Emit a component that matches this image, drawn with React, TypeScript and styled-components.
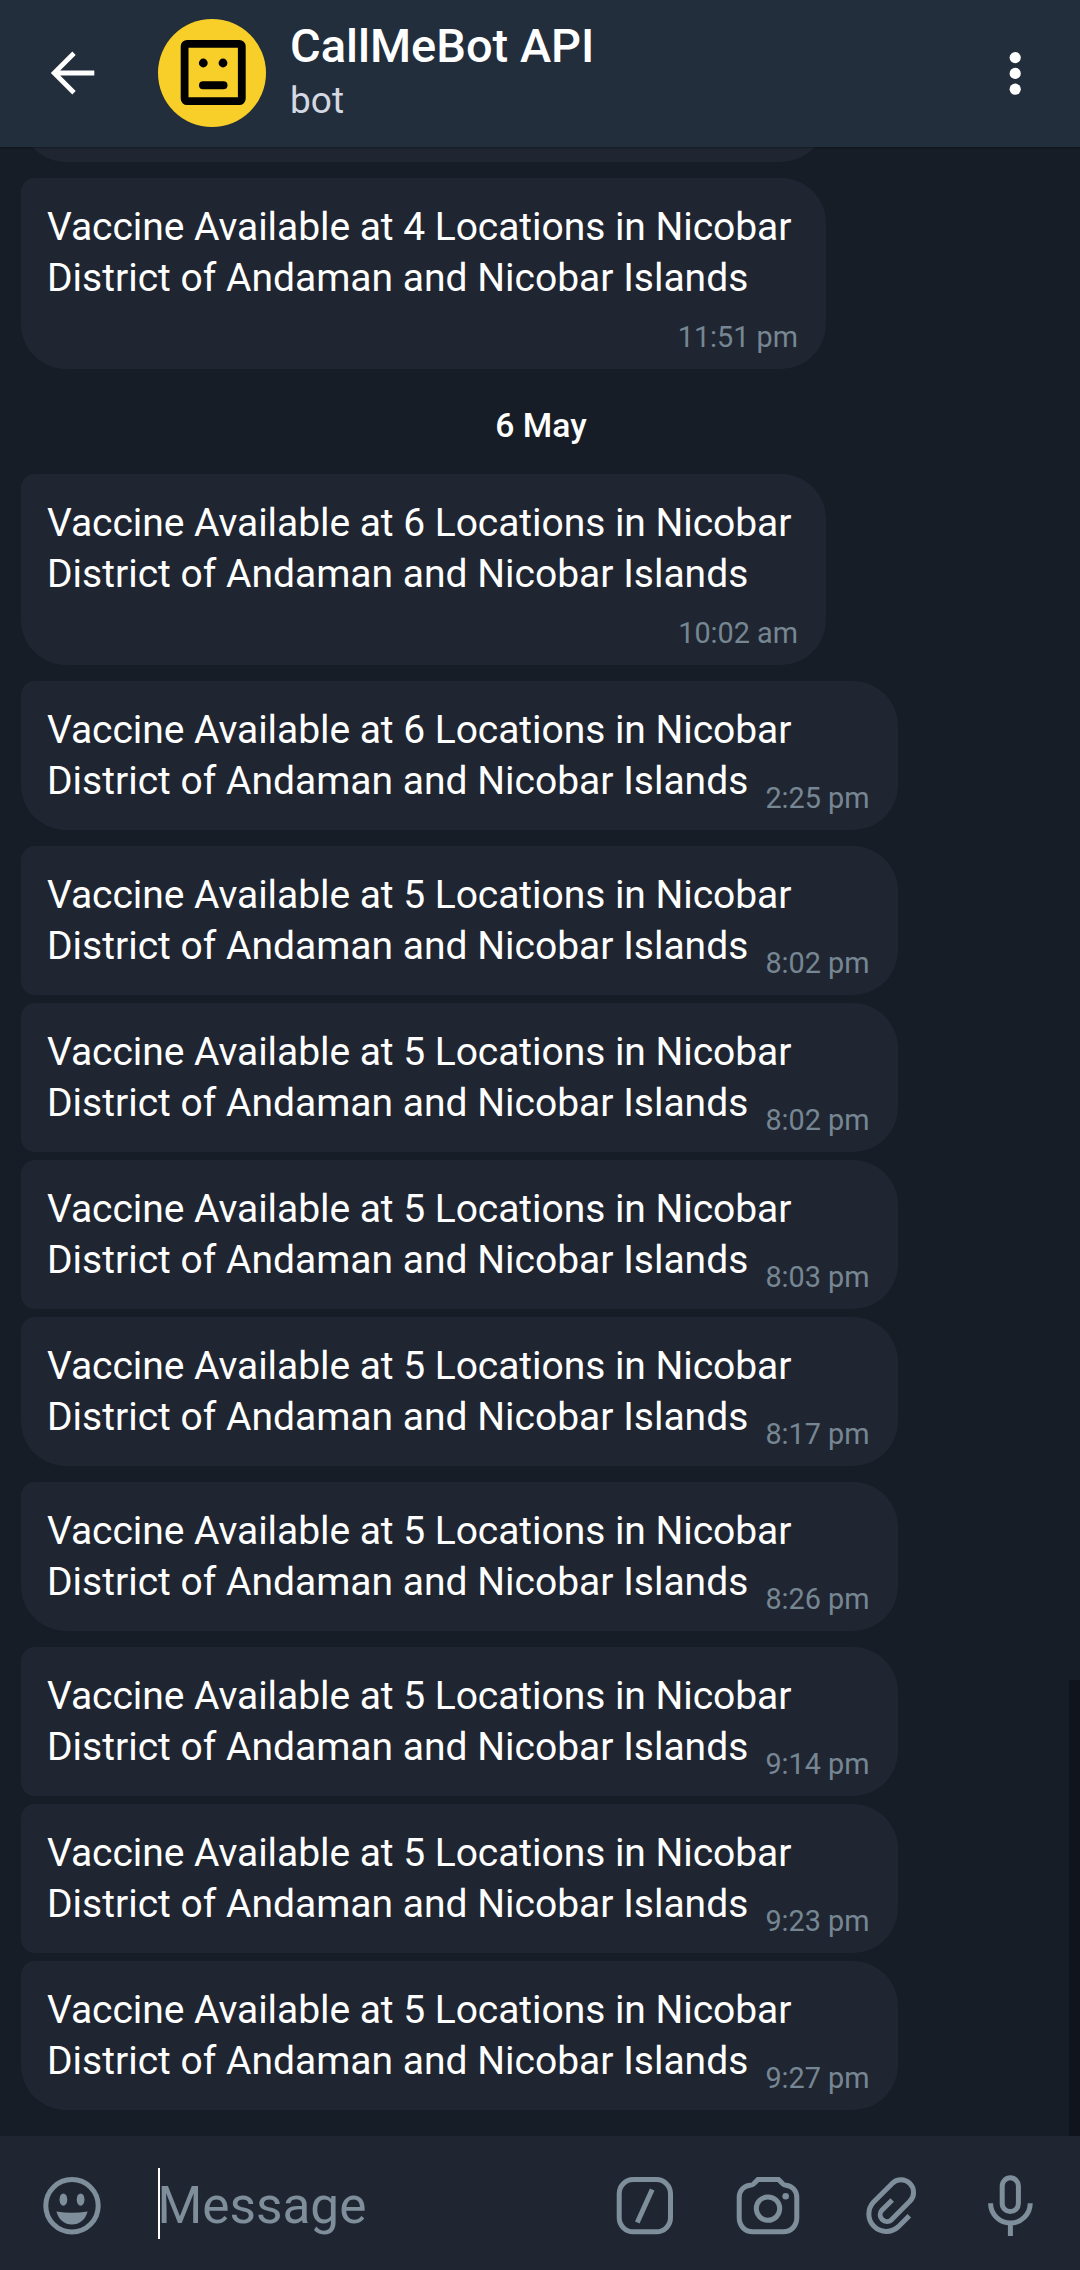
import React from "react";
import styled, { createGlobalStyle } from "styled-components";

const GlobalStyle = createGlobalStyle`
  html, body { margin: 0; padding: 0; background: #171d26; }
  *, *::before, *::after { box-sizing: border-box; }
`;

const Screen = styled.div`
  display: flex;
  flex-direction: column;
  position: relative;
  width: 1080px;
  height: 2270px;
  overflow: hidden;
  background: #171d26;
  color: #fff;
  font-family: Roboto, "Noto Sans", sans-serif;
`;

const Header = styled.header`
  flex: none;
  display: flex;
  align-items: center;
  height: 147px;
  padding: 0 59px 1px 49px;
  background: #232e3c;
  box-shadow: 0 1px 2px rgba(0, 0, 0, 0.3);
  z-index: 1;
`;

const Icon = styled.svg`
  display: block;
  flex: none;
  overflow: visible;
`;

const Avatar = styled.div`
  flex: none;
  display: flex;
  width: 108px;
  height: 108px;
  margin-left: 64px;
  border-radius: 50%;
  background: #f8cf28;
`;

const Peer = styled.div`
  flex: 1;
  display: flex;
  flex-direction: column;
  align-self: flex-start;
  gap: 3px;
  margin-left: 24px;
  padding-top: 18px;
`;

const Title = styled.h1`
  margin: 0;
  font-size: 47px;
  font-weight: 500;
  line-height: 56px;
  white-space: nowrap;
`;

const Subtitle = styled.span`
  font-size: 37px;
  line-height: 48px;
  color: #d3d8e2;
`;

const Feed = styled.main`
  flex: 1;
  display: flex;
  flex-direction: column;
  justify-content: flex-end;
  align-items: flex-start;
  min-height: 0;
  padding: 0 21px 26px;
  overflow: hidden;
`;

type BubbleProps = { $wrapTime?: boolean; $joined?: boolean };

const Bubble = styled.article<BubbleProps>`
  flex: none;
  display: flex;
  flex-direction: ${(p) => (p.$wrapTime ? "column" : "row")};
  align-items: flex-end;
  justify-content: space-between;
  width: ${(p) => (p.$wrapTime ? 805 : 876.5)}px;
  height: ${(p) => (p.$wrapTime ? 191 : 149)}px;
  margin-bottom: ${(p) => (p.$joined ? 8 : 16)}px;
  padding: 24px 28px 15px 26px;
  border-radius: 45px;
  border-top-left-radius: 14px;
  border-bottom-left-radius: ${(p) => (p.$joined ? 14 : 45)}px;
  background: #1f2632;

  &:last-child {
    margin-bottom: 0;
  }
`;

const Body = styled.p<{ $wrapTime?: boolean }>`
  flex: ${(p) => (p.$wrapTime ? "none" : "1 1 0")};
  display: flex;
  flex-direction: column;
  align-items: flex-start;
  align-self: flex-start;
  min-width: 0;
  margin: 0;
  font-size: 39px;
  line-height: 51px;
  white-space: nowrap;
`;

const Line = styled.span<{ $tight?: boolean }>`
  letter-spacing: ${(p) => (p.$tight ? "-0.05px" : "normal")};
`;

const Time = styled.time`
  flex: none;
  font-size: 28.8px;
  line-height: 34px;
  color: #778693;
  white-space: nowrap;
`;

const DayLabel = styled.div`
  flex: none;
  align-self: center;
  height: 105px;
  margin-top: -16px;
  padding: 38px 0 0 2px;
  font-size: 33.7px;
  font-weight: 500;
  line-height: 38px;
`;

const ScrollThumb = styled.div`
  position: absolute;
  top: 1680px;
  right: 0;
  width: 11px;
  height: 456px;
  background: #10141c;
`;

const Composer = styled.footer`
  flex: none;
  display: flex;
  align-items: center;
  height: 134px;
  padding: 6px 40px 0 42px;
  background: #1f2632;
  z-index: 1;
`;

const Field = styled.div`
  flex: 1;
  display: flex;
  align-items: center;
  margin-left: 56px;
`;

const Caret = styled.span`
  width: 1.5px;
  height: 71px;
  margin: 0 -2px 5px 0;
  background: #fff;
`;

const Placeholder = styled.span`
  font-size: 51.3px;
  line-height: 62px;
  color: #7e8e9a;
`;

const Actions = styled.div`
  display: flex;
  gap: 61px;
`;

const GREY = "#7e8e9a";

type Message = { count: number; time: string; wrapTime?: boolean; joined?: boolean };

const yesterday: Message[] = [{ count: 4, time: "11:51 pm", wrapTime: true }];

const today: Message[] = [
  { count: 6, time: "10:02 am", wrapTime: true },
  { count: 6, time: "2:25 pm" },
  { count: 5, time: "8:02 pm", joined: true },
  { count: 5, time: "8:02 pm", joined: true },
  { count: 5, time: "8:03 pm", joined: true },
  { count: 5, time: "8:17 pm" },
  { count: 5, time: "8:26 pm" },
  { count: 5, time: "9:14 pm", joined: true },
  { count: 5, time: "9:23 pm", joined: true },
  { count: 5, time: "9:27 pm" },
];

function MessageBubble({ count, time, wrapTime, joined }: Message) {
  return (
    <Bubble $wrapTime={wrapTime} $joined={joined}>
      <Body $wrapTime={wrapTime}>
        <Line $tight>{`Vaccine Available at ${count} Locations in Nicobar`}</Line>
        <Line>District of Andaman and Nicobar Islands</Line>
      </Body>
      <Time>{time}</Time>
    </Bubble>
  );
}

const BackIcon = () => (
  <Icon width="45" height="44" viewBox="0 0 45 44" fill="none" stroke="#fff" strokeWidth="4.8">
    <path d="M45.3 22H4.5M25 2.2L5.2 22L25 41.8" />
  </Icon>
);

const BotFace = () => (
  <Icon width="108" height="108" viewBox="0 0 108 108">
    <rect x="26.6" y="24.9" width="57.2" height="57.2" rx="2.5" fill="none" stroke="#000" strokeWidth="7.8" />
    <circle cx="45.3" cy="44" r="4.4" />
    <circle cx="65" cy="44" r="4.4" />
    <rect x="41" y="62.3" width="28.5" height="8" rx="4" />
  </Icon>
);

const MenuIcon = () => (
  <Icon width="12" height="44" viewBox="0 0 12 44" fill="#fff">
    <circle cx="6.2" cy="6.6" r="5.6" />
    <circle cx="6.2" cy="22.4" r="5.6" />
    <circle cx="6.2" cy="38.2" r="5.6" />
  </Icon>
);

const SmileIcon = () => (
  <Icon width="60" height="60" viewBox="0 0 60 60" fill={GREY}>
    <circle cx="30" cy="29.8" r="26.2" fill="none" stroke={GREY} strokeWidth="5" />
    <ellipse cx="21.4" cy="23.6" rx="3.9" ry="6.2" />
    <ellipse cx="38.6" cy="23.6" rx="3.9" ry="6.2" />
    <path d="M14.4 35.5Q30 38 45.6 35.5C43.5 43.5 37.5 48.6 30 48.6S16.5 43.5 14.4 35.5Z" />
  </Icon>
);

const CommandIcon = () => (
  <Icon width="60" height="60" viewBox="0 0 60 60" fill="none" stroke={GREY} strokeWidth="5">
    <rect x="6.2" y="3.6" width="51.3" height="52.2" rx="14" />
    <path d="M24.3 46.5L39.2 13.5" />
  </Icon>
);

const CameraIcon = () => (
  <Icon width="64" height="60" viewBox="0 0 64 60" fill="none" stroke={GREY} strokeWidth="5">
    <path d="M24 3.6H44.5L48.5 7.6Q50 9.2 52 9.3C58.5 10 62.8 15 62.8 21.5V41.8C62.8 50 57 55.8 49 55.8H19C11 55.8 5.2 50 5.2 41.8V21.5C5.2 15 9.5 10 16 9.3Q18.5 9.2 20 7.6Z" />
    <circle cx="34" cy="32.6" r="11.7" />
    <circle cx="51.7" cy="20.3" r="3.3" fill={GREY} stroke="none" />
  </Icon>
);

const ClipIcon = () => (
  <Icon width="60" height="60" viewBox="0 0 60 60" fill="none" stroke={GREY} strokeWidth="5">
    <path d="M33.2 23.9L22.9 34.2A6.8 6.8 0 0 0 32.5 43.8L50.84 25.3A12.5 12.5 0 0 0 33.16 7.46L14.63 25.93A17.5 17.5 0 0 0 39.37 50.67L50.3 39.7" />
  </Icon>
);

const MicIcon = () => (
  <Icon width="60" height="60" viewBox="0 0 60 60" fill="none" stroke={GREY} strokeWidth="5">
    <rect x="22.2" y="1.8" width="16.2" height="33.8" rx="8.1" />
    <path d="M10.6 27.3A19.8 19.8 0 0 0 50.2 27.3M30.4 47V60" />
  </Icon>
);

export default function App() {
  return (
    <>
      <GlobalStyle />
      <Screen>
        <Header>
          <BackIcon />
          <Avatar>
            <BotFace />
          </Avatar>
          <Peer>
            <Title>CallMeBot API</Title>
            <Subtitle>bot</Subtitle>
          </Peer>
          <MenuIcon />
        </Header>
        <Feed>
          <Bubble $wrapTime />
          {yesterday.map((m) => (
            <MessageBubble key={m.time} {...m} />
          ))}
          <DayLabel>6 May</DayLabel>
          {today.map((m, i) => (
            <MessageBubble key={i} {...m} />
          ))}
        </Feed>
        <ScrollThumb />
        <Composer>
          <SmileIcon />
          <Field>
            <Caret />
            <Placeholder>Message</Placeholder>
          </Field>
          <Actions>
            <CommandIcon />
            <CameraIcon />
            <ClipIcon />
            <MicIcon />
          </Actions>
        </Composer>
      </Screen>
    </>
  );
}
